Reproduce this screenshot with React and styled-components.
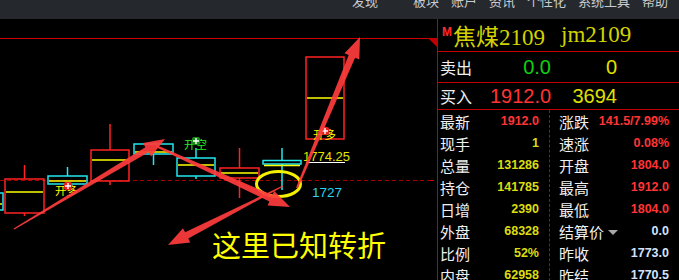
import styled, { createGlobalStyle } from 'styled-components'

const GlobalStyle = createGlobalStyle`
  html, body {
    margin: 0;
    padding: 0;
    background: #000;
  }
  body {
    font-family: "Noto Sans CJK SC", "Noto Sans", sans-serif;
    overflow: hidden;
  }
`

const Page = styled.div`
  width: 679px;
  height: 280px;
  overflow: hidden;
  background: #000;
  display: flex;
  flex-direction: column;
`
const TopBar = styled.div`
  height: 19px;
  flex: none;
  background: #25282d;
  display: flex;
  align-items: flex-start;
  padding-left: 352px;
  overflow: hidden;
`
const MenuItem = styled.div`
  font-size: 13px;
  line-height: 13px;
  margin-top: -6px;
  color: #c9ccd0;
  margin-right: ${(p) => p.gap}px;
  white-space: nowrap;
`
const Main = styled.div`
  display: flex;
  flex: 1;
  min-height: 0;
`
const ChartArea = styled.div`
  position: relative;
  width: 437px;
  height: 261px;
  flex: none;
  overflow: hidden;
`
const Note = styled.div`
  position: absolute;
  left: 212px;
  top: 211px;
  font-size: 29px;
  line-height: 1;
  color: #ffff00;
  white-space: nowrap;
`
const Panel = styled.div`
  flex: 1;
  border-left: 1px solid #c40000;
  display: flex;
  flex-direction: column;
  overflow: hidden;
`
const Header = styled.div`
  height: 32px;
  flex: none;
  border-bottom: 1px solid #c40000;
  display: flex;
  align-items: center;
  padding-left: 4px;
`
const Mark = styled.span`
  font-family: "Liberation Sans", Arial, sans-serif;
  font-weight: bold;
  font-size: 12px;
  line-height: 12px;
  color: #ff2a2a;
  align-self: flex-start;
  margin-top: 7px;
  margin-right: 1px;
`
const Title = styled.span`
  font-family: "Liberation Serif", "Noto Sans CJK SC", serif;
  font-size: 23px;
  color: #d2d200;
  margin-right: ${(p) => p.gap || 0}px;
  white-space: nowrap;
`
const TradeRow = styled.div`
  height: ${(p) => p.h}px;
  flex: none;
  border-bottom: 1px solid #c40000;
  display: grid;
  grid-template-columns: 50px 61px 66px;
  align-items: center;
  padding-left: 2px;
`
const TradeLabel = styled.span`
  font-size: 16px;
  color: #f0f0f0;
`
const TradeValue = styled.span`
  font-family: "Liberation Sans", Arial, sans-serif;
  font-size: 20px;
  color: ${(p) => p.color};
  text-align: right;
`
const Stats = styled.div`
  display: flex;
`
const StatCol = styled.div`
  width: ${(p) => p.w}px;
  flex: none;
  border-right: ${(p) => (p.divider ? '1px dashed #c40000' : 'none')};
  padding: 0 10px 0 ${(p) => p.pl}px;
  box-sizing: border-box;
`
const StatRow = styled.div`
  height: 22px;
  display: flex;
  align-items: center;
  justify-content: space-between;
`
const StatLabel = styled.span`
  font-size: 15px;
  color: #f0f0f0;
  display: flex;
  align-items: center;
  white-space: nowrap;
`
const StatValue = styled.span`
  font-family: "Liberation Sans", Arial, sans-serif;
  font-weight: bold;
  font-size: 12.5px;
  color: ${(p) => p.color};
  white-space: nowrap;
`
const Caret = styled.span`
  width: 0;
  height: 0;
  margin-left: 4px;
  margin-top: 2px;
  border-left: 5px solid transparent;
  border-right: 5px solid transparent;
  border-top: 5px solid #a8a8a8;
`

const RED = '#ff3434'
const YEL = '#dcdc10'
const BLU = '#d4e4ff'

const leftStats = [
  ['最新', '1912.0', RED],
  ['现手', '1', YEL],
  ['总量', '131286', YEL],
  ['持仓', '141785', YEL],
  ['日增', '2390', YEL],
  ['外盘', '68328', YEL],
  ['比例', '52%', YEL],
  ['内盘', '62958', YEL],
]
const rightStats = [
  ['涨跌', '141.5/7.99%', RED],
  ['速涨', '0.08%', RED],
  ['开盘', '1804.0', RED],
  ['最高', '1912.0', RED],
  ['最低', '1804.0', RED],
  ['结算价', '0.0', BLU, true],
  ['昨收', '1773.0', BLU],
  ['昨结', '1770.5', BLU],
]

const menu = [
  ['发现', 35],
  ['板块', 12],
  ['账户', 12],
  ['资讯', 12],
  ['个性化', 12],
  ['系统工具', 12],
  ['帮助', 0],
]

const CR = '#ff2222'
const CY = '#22e8f0'
const YL = '#ffff00'

// x, width, body top, body bottom, mid line, wick top, wick bottom
const candles = [
  { c: CY, x: -36, w: 39, t: 193, b: 210, m: 204 },
  { c: CR, x: 5, w: 39, t: 179, b: 213, m: 192, wt: 165, wb: 216 },
  { c: CY, x: 48, w: 39, t: 176, b: 184, m: 181, wt: 167 },
  { c: CR, x: 91, w: 38, t: 150, b: 181, m: 160, wt: 124, wb: 185 },
  { c: CY, x: 134, w: 39, t: 144, b: 154, m: 152, wb: 165 },
  { c: CY, x: 177, w: 38, t: 158, b: 176, m: 165, wt: 148, wb: 179 },
  { c: CR, x: 220, w: 39, t: 168, b: 178, m: 173, wt: 148, wb: 198 },
  { c: CY, x: 263, w: 38, t: 160.5, b: 164, m: 165.5, wt: 148, wb: 190 },
  { c: CR, x: 306, w: 38, t: 57, b: 139, m: 98 },
]

const arrows = [
  [14, 229, 165, 139, 1.5, 6],
  [156, 146, 290, 207, 2, 7],
  [283, 186, 168, 245, 1, 7],
  [297, 188, 360, 37, 2, 7],
]

function arrowPoints(x1, y1, x2, y2, w1, w2, hl = 21, hw = 16) {
  const dx = x2 - x1
  const dy = y2 - y1
  const len = Math.hypot(dx, dy)
  const ux = dx / len
  const uy = dy / len
  const nx = -uy
  const ny = ux
  const bx = x2 - ux * hl
  const by = y2 - uy * hl
  const p = (x, y, s) => `${(x + nx * s).toFixed(1)},${(y + ny * s).toFixed(1)}`
  return [
    p(x1, y1, w1 / 2),
    p(bx, by, w2 / 2),
    p(bx, by, hw / 2),
    `${x2},${y2}`,
    p(bx, by, -hw / 2),
    p(bx, by, -w2 / 2),
    p(x1, y1, -w1 / 2),
  ].join(' ')
}

const Badge = ({ x, y, fill }) => (
  <g>
    <rect x={x - 4} y={y - 4} width="8" height="8" rx="2" fill={fill} />
    <path d={`M${x} ${y - 3}V${y + 3}M${x - 3} ${y}H${x + 3}`} stroke="#fff" strokeWidth="1.4" />
  </g>
)

const Chart = () => (
  <svg width="437" height="261" viewBox="0 19 437 261" style={{ display: 'block' }}>
    <line x1="0" y1="38.5" x2="437" y2="38.5" stroke="#d00000" strokeWidth="1.2" />
    <polygon points="428,38 437,38 437,47" fill="#c00000" />
    <line x1="0" y1="180.5" x2="430" y2="180.5" stroke="#a80000" strokeWidth="1" strokeDasharray="4 3" />
    <line x1="430" y1="180.5" x2="434" y2="180.5" stroke="#e00000" strokeWidth="1" />

    {candles.map((k, i) => {
      const cx = k.x + k.w / 2
      return (
        <g key={i} fill="none" strokeWidth="1.5">
          {k.wt && <line x1={cx} y1={k.wt} x2={cx} y2={k.t} stroke={k.c} />}
          {k.wb && <line x1={cx} y1={k.b} x2={cx} y2={k.wb} stroke={k.c} />}
          <rect x={k.x} y={k.t} width={k.w} height={k.b - k.t} stroke={k.c} />
          <line x1={k.x + 1} y1={k.m} x2={k.x + k.w - 1} y2={k.m} stroke={YL} />
        </g>
      )
    })}

    <text x="55" y="195" fontSize="11.5" fill={YL} fontFamily="Noto Sans CJK SC, sans-serif">开多</text>
    <Badge x={68} y={186} fill="#e82020" />
    <text x="313" y="139" fontSize="11.5" fill={YL} fontFamily="Noto Sans CJK SC, sans-serif">开多</text>
    <Badge x={325} y={131} fill="#e82020" />
    <text x="184" y="149" fontSize="11.5" fill="#22ee22" fontFamily="Noto Sans CJK SC, sans-serif">开空</text>
    <Badge x={196} y={141} fill="#1a8a1a" />

    <text x="303" y="161" fontSize="13" fill="#e4e400" fontFamily="Liberation Sans, Arial, sans-serif">1774.25</text>
    <line x1="306" y1="162.5" x2="345" y2="162.5" stroke="#fff" strokeWidth="1" />
    <text x="312" y="197" fontSize="13.5" fill="#28d4f0" fontFamily="Liberation Sans, Arial, sans-serif">1727</text>

    <ellipse cx="278.5" cy="184" rx="22" ry="12.5" fill="none" stroke="#f4f000" strokeWidth="3" />

    {arrows.map((a, i) => (
      <polygon key={i} points={arrowPoints(...a)} fill="#ff3c3c" fillOpacity="0.92" />
    ))}
  </svg>
)

const App = () => (
  <Page>
    <GlobalStyle />
    <TopBar>
      {menu.map(([t, g]) => (
        <MenuItem key={t} gap={g}>{t}</MenuItem>
      ))}
    </TopBar>
    <Main>
      <ChartArea>
        <Chart />
        <Note>这里已知转折</Note>
      </ChartArea>
      <Panel>
        <Header>
          <Mark>M</Mark>
          <Title gap={16}>焦煤2109</Title>
          <Title>jm2109</Title>
        </Header>
        <TradeRow h={30}>
          <TradeLabel>卖出</TradeLabel>
          <TradeValue color="#10d010">0.0</TradeValue>
          <TradeValue color="#e0e000">0</TradeValue>
        </TradeRow>
        <TradeRow h={26}>
          <TradeLabel>买入</TradeLabel>
          <TradeValue color="#ff3434">1912.0</TradeValue>
          <TradeValue color="#e0e000">3694</TradeValue>
        </TradeRow>
        <Stats>
          <StatCol w={112} pl={2} divider>
            {leftStats.map(([l, v, c]) => (
              <StatRow key={l}>
                <StatLabel>{l}</StatLabel>
                <StatValue color={c}>{v}</StatValue>
              </StatRow>
            ))}
          </StatCol>
          <StatCol w={129} pl={9}>
            {rightStats.map(([l, v, c, caret]) => (
              <StatRow key={l}>
                <StatLabel>
                  {l}
                  {caret && <Caret />}
                </StatLabel>
                <StatValue color={c}>{v}</StatValue>
              </StatRow>
            ))}
          </StatCol>
        </Stats>
      </Panel>
    </Main>
  </Page>
)

export default App
